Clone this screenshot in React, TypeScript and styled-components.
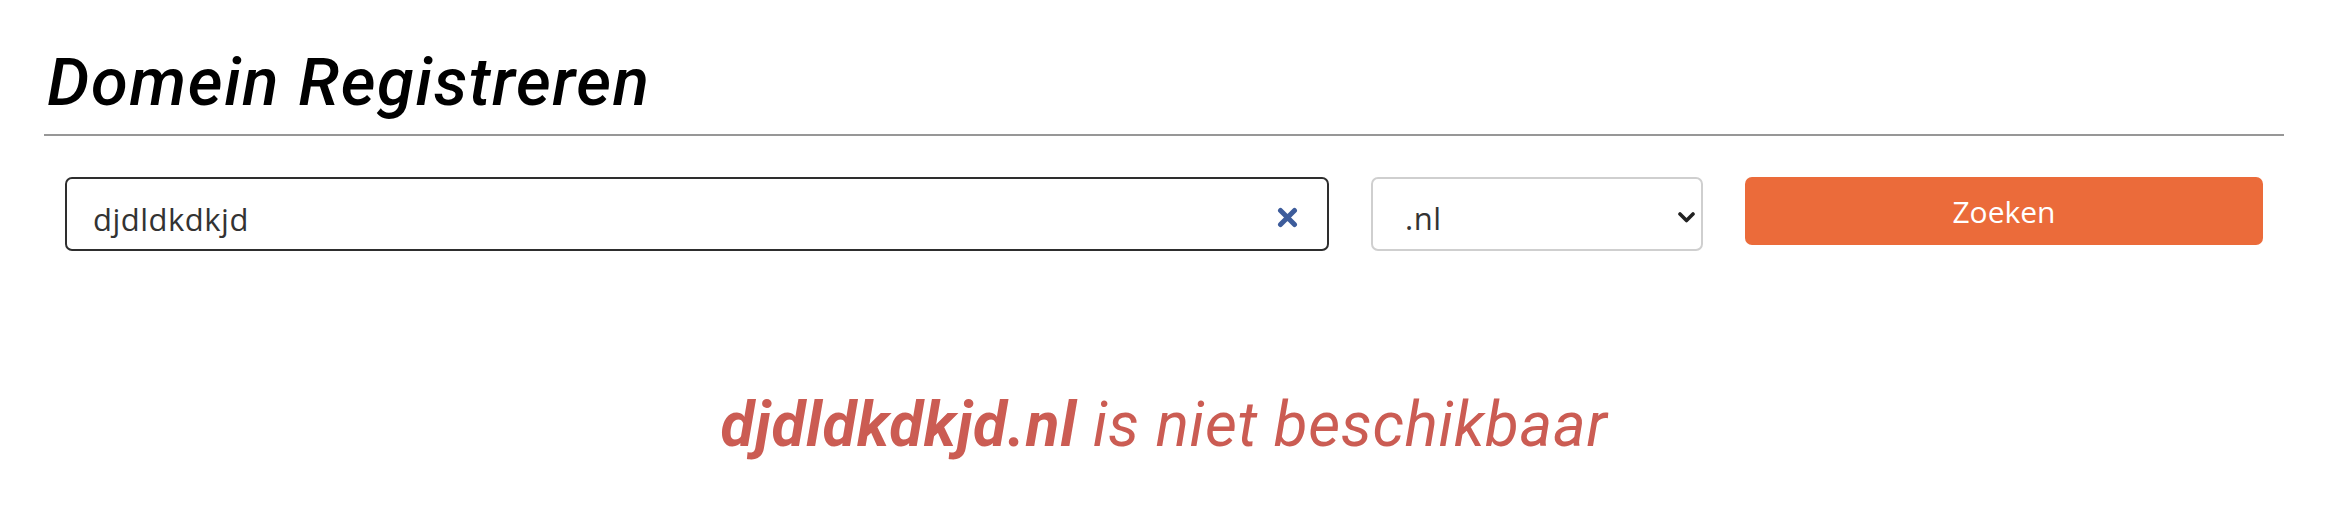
import React, { FC } from "react";
import styled, { createGlobalStyle } from "styled-components";

const GlobalStyle = createGlobalStyle`
  body {
    margin: 0;
    background: #fff;
    font-family: Roboto, "Liberation Sans", sans-serif;
  }
`;

const PageEl = styled.main`
  padding: 42px 46px 0 44px;
`;

const TitleEl = styled.h1`
  margin: 0;
  font-family: Roboto, "Liberation Sans", sans-serif;
  font-style: italic;
  font-weight: 500;
  font-size: 67px;
  line-height: 80px;
  letter-spacing: 1.6px;
  color: #000;
  padding-left: 3px;
`;

const DividerEl = styled.hr`
  margin: 12px 0 0;
  border: 0;
  height: 2px;
  background: #979797;
`;

const SearchRowEl = styled.form`
  display: grid;
  grid-template-columns: 1264px 332px 518px;
  column-gap: 42px;
  align-items: start;
  margin-top: 41px;
  padding: 0 22px 0 21px;
`;

const FieldEl = styled.div`
  position: relative;
`;

const InputEl = styled.input`
  box-sizing: border-box;
  display: block;
  width: 100%;
  height: 74px;
  padding: 10px 70px 0 26px;
  border: 2px solid #2e2e2e;
  border-radius: 7px;
  font-family: "Open Sans", Roboto, sans-serif;
  font-size: 31px;
  letter-spacing: 0.5px;
  color: #333;
  outline: none;
`;

const ClearEl = styled.button`
  position: absolute;
  top: 30px;
  right: 31px;
  width: 21px;
  height: 21px;
  padding: 0;
  border: 0;
  background: none;
  display: flex;
  cursor: pointer;
`;

const SelectWrapEl = styled.div`
  position: relative;
`;

const SelectEl = styled.select`
  box-sizing: border-box;
  display: block;
  width: 100%;
  height: 74px;
  padding: 8px 50px 0 32px;
  border: 2px solid #cfcfcf;
  border-radius: 7px;
  background: #fff;
  appearance: none;
  font-family: "Open Sans", Roboto, sans-serif;
  font-size: 31px;
  letter-spacing: 0.5px;
  color: #333;
  outline: none;
`;

const ChevronEl = styled.svg`
  position: absolute;
  top: 35px;
  right: 8px;
  pointer-events: none;
`;

const SubmitEl = styled.button`
  box-sizing: border-box;
  height: 68px;
  border: 0;
  border-radius: 7px;
  background: #eb6b3a;
  color: #fff;
  font-family: "Open Sans", Roboto, sans-serif;
  font-size: 30px;
  cursor: pointer;
`;

const ResultEl = styled.p`
  margin: 137px 0 0;
  text-align: center;
  font-family: Roboto, "Liberation Sans", sans-serif;
  font-style: italic;
  font-size: 62px;
  line-height: 74px;
  letter-spacing: 0.7px;
  color: #cb5c53;
`;

const DomainEl = styled.strong`
  font-weight: 700;
`;

const App: FC = () => {
  const domain = "djdldkdkjd";
  const extensions: string[] = [".nl", ".com", ".be", ".eu"];
  return (
    <>
      <GlobalStyle />
      <PageEl>
        <TitleEl>Domein Registreren</TitleEl>
        <DividerEl />
        <SearchRowEl onSubmit={(e) => e.preventDefault()}>
          <FieldEl>
            <InputEl defaultValue={domain} />
            <ClearEl type="button" aria-label="Wissen">
              <svg width="21" height="21" viewBox="0 0 21 21">
                <path
                  d="M3.5 3.5 L17.5 17.5 M17.5 3.5 L3.5 17.5"
                  stroke="#3d5c9b"
                  strokeWidth="5"
                  strokeLinecap="round"
                />
              </svg>
            </ClearEl>
          </FieldEl>
          <SelectWrapEl>
            <SelectEl defaultValue=".nl">
              {extensions.map((ext: string) => (
                <option key={ext} value={ext}>
                  {ext}
                </option>
              ))}
            </SelectEl>
            <ChevronEl width="17" height="11" viewBox="0 0 17 11">
              <path
                d="M2 2 L8.5 8.5 L15 2"
                fill="none"
                stroke="#222"
                strokeWidth="3.6"
                strokeLinecap="round"
                strokeLinejoin="round"
              />
            </ChevronEl>
          </SelectWrapEl>
          <SubmitEl type="submit">Zoeken</SubmitEl>
        </SearchRowEl>
        <ResultEl>
          <DomainEl>{domain}.nl</DomainEl> is niet beschikbaar
        </ResultEl>
      </PageEl>
    </>
  );
};

export default App;
